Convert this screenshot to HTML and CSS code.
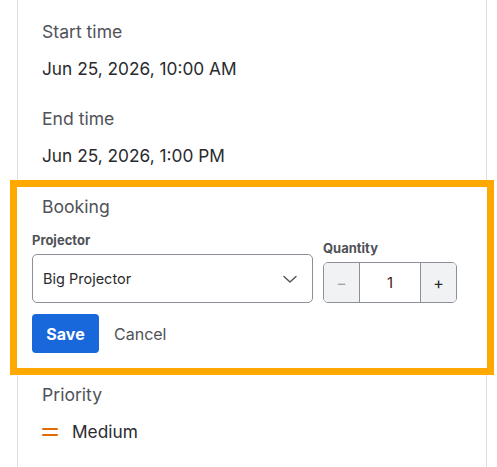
FILE: index.html
```html
<!DOCTYPE html>
<html lang="en">
<head>
<meta charset="utf-8">
<title>Event details</title>
<link rel="stylesheet" href="styles.css">
</head>
<body>
<div class="panel">
  <div class="field">
    <div class="field-label">Start time</div>
    <div class="field-value">Jun 25, 2026, 10:00 AM</div>
  </div>
  <div class="field">
    <div class="field-label">End time</div>
    <div class="field-value">Jun 25, 2026, 1:00 PM</div>
  </div>

  <section class="booking">
    <div class="booking-title">Booking</div>
    <div class="booking-row">
      <div class="control">
        <label class="control-label">Projector</label>
        <div class="select">
          <span>Big Projector</span>
          <svg class="chevron" width="16" height="16" viewBox="0 0 16 16" aria-hidden="true">
            <path d="M2 5.5 L8 11 L14 5.5" fill="none" stroke="#505258" stroke-width="1.4" stroke-linecap="round" stroke-linejoin="round"/>
          </svg>
        </div>
      </div>
      <div class="control">
        <label class="control-label">Quantity</label>
        <div class="stepper">
          <button class="step step-minus" type="button">&minus;</button>
          <span class="step-value">1</span>
          <button class="step step-plus" type="button">+</button>
        </div>
      </div>
    </div>
    <div class="actions">
      <button class="btn-save" type="button">Save</button>
      <button class="btn-cancel" type="button">Cancel</button>
    </div>
  </section>

  <div class="field">
    <div class="field-label">Priority</div>
    <div class="field-value priority">
      <svg width="16" height="16" viewBox="0 0 16 16" aria-hidden="true">
        <rect x="0" y="4" width="16" height="2" rx="1" fill="#e06c00"/>
        <rect x="0" y="10" width="16" height="2" rx="1" fill="#e06c00"/>
      </svg>
      <span>Medium</span>
    </div>
  </div>
</div>
</body>
</html>
```

FILE: styles.css
```css
html, body {
  margin: 0;
  padding: 0;
  background: #ffffff;
}

body {
  font-family: Inter, "Noto Sans", sans-serif;
  color: #292a2e;
}

.panel {
  margin-left: 17px;
  width: 470px;
  min-height: 467px;
  box-sizing: border-box;
  border-left: 1px solid #dcdfe4;
  border-right: 1px solid #dcdfe4;
  padding: 20px 24px 0 24px;
}

.field {
  margin-bottom: 19px;
}

.field:first-child {
  margin-bottom: 26px;
}

.field-label {
  font-size: 17.6px;
  line-height: 24px;
  color: #505258;
}

.field-value {
  margin-top: 13px;
  font-size: 17.3px;
  line-height: 24px;
  color: #292a2e;
}

/* editing block */
.booking {
  margin: 0 -25px;
  padding: 8px 0 15px 15px;
  background: #ffffff;
  outline: 7px solid #ffa800;
}

.booking-title {
  margin-left: 10px;
  font-size: 17.6px;
  line-height: 24px;
  color: #505258;
}

.booking-row {
  display: flex;
  align-items: flex-end;
  gap: 10px;
  margin-top: 13px;
}

.control {
  display: flex;
  flex-direction: column;
}

.control-label {
  font-size: 13px;
  line-height: 16px;
  font-weight: 700;
  color: #505258;
  margin-bottom: 6px;
}

.select {
  width: 281px;
  height: 49px;
  box-sizing: border-box;
  border: 1px solid #8c8f97;
  border-radius: 5px;
  display: flex;
  align-items: center;
  justify-content: space-between;
  padding: 0 14px 0 10px;
  font-size: 14.5px;
  color: #292a2e;
}

.stepper {
  display: flex;
  width: 134px;
  height: 41px;
  box-sizing: border-box;
  border: 1px solid #8c8f97;
  border-radius: 5px;
  overflow: hidden;
}

.step {
  width: 36px;
  border: none;
  margin: 0;
  padding: 0;
  background: #f1f2f4;
  font-family: inherit;
  font-size: 16px;
  color: #292a2e;
}

.step-minus {
  color: #a0a3aa;
  border-right: 1px solid #8c8f97;
}

.step-plus {
  border-left: 1px solid #8c8f97;
}

.step-value {
  flex: 1;
  display: flex;
  align-items: center;
  justify-content: center;
  font-size: 15px;
  color: #4a1d18;
}

.actions {
  display: flex;
  align-items: center;
  gap: 7px;
  margin-top: 11px;
}

.btn-save {
  width: 67px;
  height: 39px;
  border: none;
  border-radius: 4px;
  background: #1868db;
  color: #ffffff;
  font-family: inherit;
  font-size: 16px;
  font-weight: 700;
}

.btn-cancel {
  height: 39px;
  padding: 0 8px;
  border: none;
  background: transparent;
  color: #505258;
  font-family: inherit;
  font-size: 16px;
}

.booking + .field {
  margin-top: 15px;
}

.priority {
  display: flex;
  align-items: center;
  gap: 14px;
}
```
